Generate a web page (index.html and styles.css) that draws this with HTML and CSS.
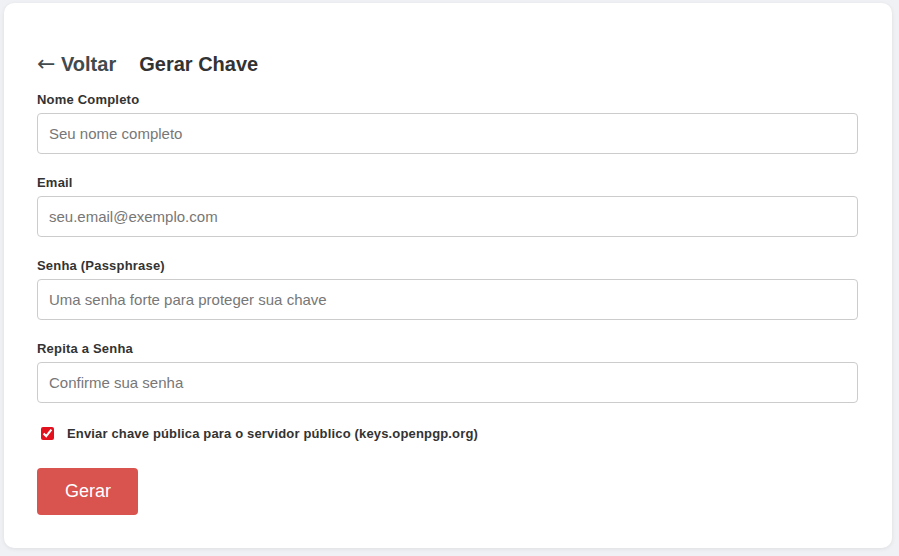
FILE: index.html
```html
<!DOCTYPE html>
<html lang="pt">
<head>
<meta charset="utf-8">
<title>Gerar Chave</title>
<link rel="stylesheet" href="styles.css">
</head>
<body>
<main class="card">
  <header class="page-header">
    <a class="back-link" href="#"><span class="arrow">←</span> Voltar</a>
    <h2 class="title">Gerar Chave</h2>
  </header>
  <form class="form">
    <div class="field">
      <label class="label" for="nome">Nome Completo</label>
      <input class="input" id="nome" type="text" placeholder="Seu nome completo">
    </div>
    <div class="field">
      <label class="label" for="email">Email</label>
      <input class="input" id="email" type="email" placeholder="seu.email@exemplo.com">
    </div>
    <div class="field">
      <label class="label" for="senha">Senha (Passphrase)</label>
      <input class="input" id="senha" type="password" placeholder="Uma senha forte para proteger sua chave">
    </div>
    <div class="field">
      <label class="label" for="senha2">Repita a Senha</label>
      <input class="input" id="senha2" type="password" placeholder="Confirme sua senha">
    </div>
    <label class="check-row">
      <input class="checkbox" type="checkbox" checked>
      <span class="check-text">Enviar chave pública para o servidor público (keys.openpgp.org)</span>
    </label>
    <div class="actions">
      <button class="btn" type="button">Gerar</button>
    </div>
  </form>
</main>
</body>
</html>
```
FILE: styles.css
```css
html, body {
  margin: 0;
  padding: 0;
}
body {
  background: #f0f1f5;
  font-family: "Liberation Sans", Arial, sans-serif;
  color: #333;
  padding: 3px 7px 8px 4px;
}
.card {
  background: #fff;
  border-radius: 10px;
  box-shadow: 0 1px 4px rgba(0, 0, 0, 0.08);
  padding: 14px 34px 33px 33px;
  box-sizing: border-box;
  height: 545px;
}
.page-header {
  display: flex;
  align-items: center;
  gap: 23px;
  margin-top: 35px;
  height: 24px;
  margin-bottom: 16px;
}
.back-link {
  font-size: 20px;
  font-weight: bold;
  color: #424a4d;
  text-decoration: none;
  line-height: 24px;
  white-space: nowrap;
}
.arrow {
  font-family: "DejaVu Sans", sans-serif;
  font-weight: normal;
  font-size: 22px;
  line-height: 1;
}
.title {
  margin: 0;
  font-size: 20px;
  font-weight: bold;
  color: #333;
  line-height: 24px;
}
.form {
  display: flex;
  flex-direction: column;
}
.field {
  display: flex;
  flex-direction: column;
  margin-bottom: 21px;
}
.label {
  font-size: 13px;
  font-weight: bold;
  line-height: 16px;
  margin-bottom: 5px;
  color: #333;
  letter-spacing: 0.2px;
}
.input {
  height: 41px;
  box-sizing: border-box;
  border: 1px solid #ccc;
  border-radius: 4px;
  padding: 0 11px;
  font-family: "Liberation Sans", Arial, sans-serif;
  font-size: 15px;
  color: #333;
  outline: none;
}
.input::placeholder {
  color: #777;
}
.check-row {
  display: flex;
  align-items: center;
  margin-top: 0;
  height: 19px;
}
.checkbox {
  width: 13px;
  height: 13px;
  margin: 3px 13px 3px 4px;
  accent-color: #e3101e;
}
.check-text {
  font-size: 13px;
  font-weight: bold;
  color: #333;
  letter-spacing: 0.16px;
}
.actions {
  margin-top: 25px;
}
.btn {
  background: #d9534f;
  color: #fff;
  border: none;
  border-radius: 4px;
  font-family: "Liberation Sans", Arial, sans-serif;
  font-size: 18px;
  line-height: 21px;
  padding: 13px 28px;
  width: 101px;
  height: 47px;
}
```
